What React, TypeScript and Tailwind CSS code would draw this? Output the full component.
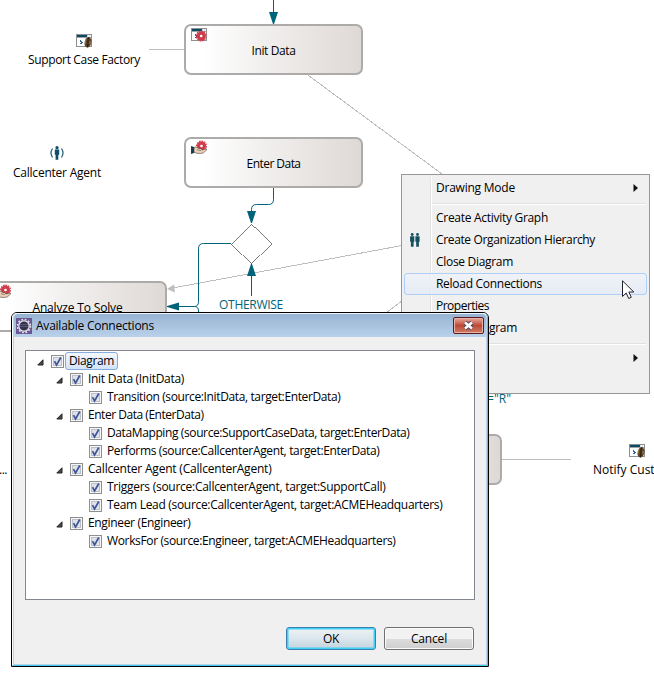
import { useLayoutEffect, useRef, type ReactNode } from "react";

const FONT = "font-['Open_Sans','Noto_Sans',sans-serif]";

/** One line of text whose letter spacing is fitted to a given width. */
function Label({ text, w, className = "" }: { text: string; w: number; className?: string }) {
  const ref = useRef<HTMLSpanElement>(null);
  useLayoutEffect(() => {
    const el = ref.current;
    if (!el) return;
    el.style.letterSpacing = "0px";
    const natural = el.getBoundingClientRect().width;
    el.style.letterSpacing = `${(w - natural) / text.length}px`;
  }, [text, w]);
  return (
    <span ref={ref} className={`inline-block shrink-0 whitespace-pre ${className}`}>
      {text}
    </span>
  );
}

function Gear({ cx, cy }: { cx: number; cy: number }) {
  return (
    <g>
      <circle cx={cx} cy={cy} r="4.6" fill="#cf3d4c" />
      <circle cx={cx} cy={cy} r="4.9" fill="none" stroke="#cf3d4c" strokeWidth="1.2" strokeDasharray="1.6 .9" />
      <circle cx={cx} cy={cy} r="1.3" fill="#fff" />
    </g>
  );
}

function WindowFrame() {
  return (
    <g shapeRendering="crispEdges">
      <rect x="0.5" y="0.5" width="15" height="12" fill="#fff" stroke="#8e9092" />
      <rect x="1" y="1" width="10" height="2" fill="#0b4a62" />
      <rect x="11" y="1" width="1" height="2" fill="#d5dadd" />
      <rect x="13" y="1" width="1" height="2" fill="#d5dadd" />
      <rect x="1" y="3" width="14" height="1" fill="#9fa3a5" />
      <path d="M4 6h1v1h1v1h1v1h-1v1h-2v-1h1v-1h-1z" fill="#31668a" />
    </g>
  );
}

function GearWindowIcon() {
  return (
    <svg width="16" height="14" className="block overflow-visible">
      <WindowFrame />
      <Gear cx={10.2} cy={8} />
    </svg>
  );
}

function BeanWindowIcon() {
  return (
    <svg width="16" height="14" className="block overflow-visible">
      <WindowFrame />
      <ellipse cx="12" cy="8.4" rx="3.4" ry="5.3" transform="rotate(12 12 8.4)" fill="#5d4325" />
      <path d="M13 3.5c-3 3 1 5-2 9.5" stroke="#2e1d10" strokeWidth="1.1" fill="none" />
      <path d="M10.300 5.500c-1 1.500-1 3-.7 4M14 7v3" stroke="#a8875a" fill="none" />
    </svg>
  );
}

function HandGearIcon() {
  return (
    <svg width="16" height="14" className="block overflow-visible">
      <Gear cx={10.5} cy={5} />
      <path d="M0 5l3 1v6l-3 1z" fill="#153f50" />
      <path d="M3 6.5c2-1 3.500 0 5 1h2l1 1.500 4-1.200 1 .7-3.500 3.300-3 .7-4-.3-2.500-1z" fill="#e8d0bb" stroke="#4d3b35" strokeWidth=".6" />
      <path d="M6 8.700l4 .8" stroke="#66483f" strokeWidth=".6" />
    </svg>
  );
}

function AgentIcon() {
  return (
    <svg width="14" height="14" className="block">
      <circle cx="7" cy="1.700" r="1.600" fill="#0e4e67" />
      <path d="M4.800 3.500h4.400v5.200h-.9v5.100h-2.700v-5.100h-.8z" fill="#0e4e67" />
      <path d="M2.500 2.500c-2 3-2 6 0 9M11.500 2.500c2 3 2 6 0 9" stroke="#1c5a72" strokeWidth="1.200" fill="none" />
    </svg>
  );
}

function PeopleIcon() {
  return (
    <svg width="10" height="14" className="block">
      {[2.2, 7.5].map((x) => (
        <g key={x} fill="#13505f">
          <circle cx={x} cy="1.500" r="1.400" />
          <path d={`M${x - 2.1} 3.300h4.200v5.400h-.7v5.100h-2.700v-5.100h-.8z`} />
        </g>
      ))}
    </svg>
  );
}

function EclipseIcon() {
  return (
    <svg width="16" height="16" className="block shrink-0">
      <rect width="16" height="16" fill="#695795" />
      <circle cx="8" cy="8" r="6.500" fill="none" stroke="#e8e6ec" strokeWidth="1.600" strokeDasharray="1.700 1.700" />
      <circle cx="8" cy="8" r="5.200" fill="#34324a" stroke="#e4e2ea" strokeWidth="1.300" />
      <path d="M4 6.500h8M3.800 8.500h8.400" stroke="#615a85" strokeWidth=".9" />
    </svg>
  );
}

function Activity({ name, w, place, icon }: { name: string; w: number; place: string; icon?: ReactNode }) {
  return (
    <div
      className={`absolute ${place} flex h-[51px] w-[179px] items-center justify-center rounded-[7px] border-2 border-[#adabaa] bg-linear-to-r from-white from-10% via-[#f1efee] via-45% to-[#dfd9d6] pt-[2px]`}
    >
      <span className="absolute top-[2px] left-[5px]">{icon}</span>
      <Label text={name} w={w} />
    </div>
  );
}

function Connections() {
  return (
    <svg width="654" height="680" className="absolute inset-0" fill="none">
      <g stroke="#bebebe">
        <path d="M149 49.500H184M502 459.500H571" />
        <path d="M308.500 75.500L442 174M402 245.500L170 288.500M386 313L402 301" shapeRendering="crispEdges" />
      </g>
      <path d="M167 289l7-4.500 1 8z" fill="#bebebe" />
      <g stroke="#006478">
        <path d="M273.500 0V14" />
        <path d="M273.500 188V199.500q0 5-5 5H256.500q-5 0-5 5V213" />
        <path d="M231 243.500H203.500q-5 0-5 5V301.500q0 5-4 5H178M198.500 313V311q0-4.500-4-4.500" />
        <path d="M251.500 296V274" />
      </g>
      <g fill="#006478">
        <path d="M269 12h9l-4 12h-1zM247 211h9l-4 12h-1zM247 276h9l-4-12h-1zM167 306l12-3.500v8l-12-3.500z" />
      </g>
      <path d="M251.500 223.500l20 20-20 20-20-20z" fill="#fff" stroke="#6f686c" strokeWidth=".9" shapeRendering="crispEdges" />
    </svg>
  );
}

function MenuItem({ text, w, icon, sub, active }: { text?: string; w?: number; icon?: ReactNode; sub?: boolean; active?: boolean }) {
  return (
    <div
      className={`flex h-[22px] items-center rounded-[3px] border ${
        active ? "border-[#aecff7] bg-linear-to-b from-[#f0f2f7]/90 to-[#e4ebf6]/90" : "border-transparent"
      }`}
    >
      <span className="flex w-[31px] shrink-0 pl-[5px]">{icon}</span>
      {text && w && <Label text={text} w={w} />}
      {sub && (
        <svg width="5" height="8" className="mr-[8px] ml-auto">
          <path d="M0.500 0L5 4 .5 8z" fill="#111" />
        </svg>
      )}
    </div>
  );
}

function MenuSeparator() {
  return <div className="mt-[4px] mr-px mb-[2px] ml-[28px] h-[2px] border-t border-b border-t-[#e0e0e0] border-b-white bg-[#f0f0f0]" />;
}

function ContextMenu() {
  return (
    <div className="absolute top-[174px] left-[401px] h-[220px] w-[249px] border border-[#979797] bg-[#f0f0f0] p-[2px]">
      <div className="absolute top-[2px] bottom-[2px] left-[28px] w-[2px] border-r border-l border-r-white border-l-[#e2e3e3]" />
      <div className="relative flex flex-col">
        <MenuItem text="Drawing Mode" w={79} sub />
        <MenuSeparator />
        <MenuItem text="Create Activity Graph" w={112} />
        <MenuItem text="Create Organization Hierarchy" w={159} icon={<PeopleIcon />} />
        <MenuItem text="Close Diagram" w={77} />
        <MenuItem text="Reload Connections" w={106} active />
        <MenuItem text="Properties" w={53} />
        <div className="flex h-[22px] items-center pl-[85px]">
          <Label text="gram" w={28} />
        </div>
        <MenuSeparator />
        <MenuItem sub />
        <MenuItem />
      </div>
    </div>
  );
}

type Row = { text: string; w: number; level: 0 | 1 | 2 };

const ROWS: Row[] = [
  { text: "Diagram", w: 45, level: 0 },
  { text: "Init Data (InitData)", w: 96, level: 1 },
  { text: "Transition (source:InitData, target:EnterData)", w: 233.5, level: 2 },
  { text: "Enter Data (EnterData)", w: 115.5, level: 1 },
  { text: "DataMapping (source:SupportCaseData, target:EnterData)", w: 302.5, level: 2 },
  { text: "Performs (source:CallcenterAgent, target:EnterData)", w: 272.5, level: 2 },
  { text: "Callcenter Agent (CallcenterAgent)", w: 183.5, level: 1 },
  { text: "Triggers (source:CallcenterAgent, target:SupportCall)", w: 278.5, level: 2 },
  { text: "Team Lead (source:CallcenterAgent, target:ACMEHeadquarters)", w: 335.5, level: 2 },
  { text: "Engineer (Engineer)", w: 102.5, level: 1 },
  { text: "WorksFor (source:Engineer, target:ACMEHeadquarters)", w: 288.5, level: 2 },
];

const INDENT = ["pl-[11px]", "pl-[30px]", "pl-[49px]"];

function TreeRow({ text, w, level }: Row) {
  return (
    <div className={`flex h-[18px] items-center ${INDENT[level]}`}>
      <svg width="7" height="7" className="mt-[2px] mr-[7px] shrink-0">
        {level < 2 && <path d="M6 .8V6H.8z" fill="#4a4a4a" stroke="#222" />}
      </svg>
      <svg width="13" height="13" className="mt-px shrink-0">
        <rect x=".5" y=".5" width="12" height="12" fill="#f6f6f6" stroke="#8e8f8f" />
        <rect x="2.500" y="2.500" width="8" height="8" fill="#dfe3e9" stroke="#bcc1c9" />
        <path d="M3.500 6.200l2 3.800L9.800 2.500" fill="none" stroke="#3f5596" strokeWidth="1.700" />
      </svg>
      {level === 0 ? (
        <span className="ml-px flex h-[18px] items-center rounded-[3px] border border-[#84acdd] bg-linear-to-b from-[#f4f8fd] to-[#d3e3fa] px-[3px]">
          <Label text={text} w={w} />
        </span>
      ) : (
        <Label text={text} w={w} className="ml-[5px]" />
      )}
    </div>
  );
}

function DialogButton({ text, w, primary }: { text: string; w: number; primary?: boolean }) {
  return (
    <button
      className={`flex h-[23px] w-[90px] items-center justify-center rounded-[3px] border ${
        primary
          ? "border-[#3c7fb1] bg-linear-to-b from-[#eef3f6] from-0% via-[#dce6ec] via-50% to-[#c4d3dd] inset-ring-[1.5px] inset-ring-[#3fd0f5]"
          : "border-[#707070] bg-linear-to-b from-[#f2f2f2] from-50% via-[#dddddd] via-50% to-[#cfcfcf] inset-ring-1 inset-ring-[#fbfbfb]"
      }`}
    >
      <Label text={text} w={w} />
    </button>
  );
}

function Dialog() {
  return (
    <div className="absolute top-[312px] left-[11px] flex h-[355px] w-[478px] flex-col rounded-t-[6px] border border-black bg-[#f0f0f0]">
      <div className="flex grow flex-col rounded-t-[5px] border border-t-[#eef5fc] border-r-[#42c8e8] border-b-[#42c8e8] border-l-white">
        <div className="flex grow flex-col rounded-t-[4px] border-r border-b border-l border-[#b9d1ea]">
          <div className="flex h-[23px] items-center rounded-t-[4px] bg-linear-to-b from-[#98b3d3] to-[#b9d1ea] pr-[2px] pl-[2px]">
            <EclipseIcon />
            <Label text="Available Connections" w={118} className="ml-[4px]" />
            <button className="mb-px ml-auto flex h-[17px] w-[31px] items-center justify-center rounded-[2px] border border-[#5a1a20] bg-linear-to-b from-[#e6aaa0] from-0% via-[#bd4837] via-50% to-[#cf7c66] inset-ring-1 inset-ring-[#eab3a8]">
              <svg width="13" height="11">
                <path d="M3 2.500l7 6M10 2.500l-7 6" stroke="#4e4658" strokeWidth="4.500" />
                <path d="M3 2.500l7 6M10 2.500l-7 6" stroke="#fff" strokeWidth="2.500" />
              </svg>
            </button>
          </div>
          <div className="mt-[13px] ml-[11px] flex h-[250px] w-[450px] flex-col border border-[#828790] bg-white pt-px">
            {ROWS.map((row) => (
              <TreeRow key={row.text} {...row} />
            ))}
          </div>
          <div className="mt-[27px] mr-[12px] flex justify-end gap-[8px]">
            <DialogButton text="OK" w={16} primary />
            <DialogButton text="Cancel" w={36} />
          </div>
        </div>
      </div>
    </div>
  );
}

export default function App() {
  return (
    <div className={`relative h-[680px] w-[654px] overflow-hidden bg-white text-[12px] leading-[16px] text-black ${FONT}`}>
      <Connections />
      <Activity name="Init Data" w={44} place="left-[184px] top-[24px]" icon={<GearWindowIcon />} />
      <Activity name="Enter Data" w={54} place="left-[184px] top-[137px]" icon={<HandGearIcon />} />
      <Activity name="Analyze To Solve" w={90} place="left-[-12px] top-[281px]" icon={<HandGearIcon />} />
      <Activity name="" w={0} place="left-[323px] top-[434px]" />

      <div className="absolute top-[34px] left-[28px] flex w-[112px] flex-col items-center gap-[4px]">
        <BeanWindowIcon />
        <Label text="Support Case Factory" w={112} />
      </div>
      <div className="absolute top-[146px] left-[13px] flex w-[88px] flex-col items-center gap-[5px]">
        <AgentIcon />
        <Label text="Callcenter Agent" w={88} />
      </div>
      <div className="absolute top-[444px] left-[593px] flex w-[61px] flex-col gap-[4px]">
        <span className="pl-[36px]">
          <BeanWindowIcon />
        </span>
        <Label text="Notify Cust" w={61} />
      </div>
      <div className="absolute top-[462px] left-[-1px]">
        <Label text="..." w={8} />
      </div>
      <div className="absolute top-[297px] left-[219px] text-[#006478]">
        <Label text="OTHERWISE" w={64} />
      </div>
      <div className="absolute top-[391px] left-[487px] text-[#006478]">
        <Label text={'="R"'} w={24} />
      </div>

      <ContextMenu />
      <Dialog />
      <svg width="13" height="20" className="absolute top-[280px] left-[622px]">
        <path d="M.5 .8V16.500l3.700-3.500 2.500 5.500 2.600-1.200-2.500-5.300h5z" fill="#fff" stroke="#22202e" />
      </svg>
    </div>
  );
}
